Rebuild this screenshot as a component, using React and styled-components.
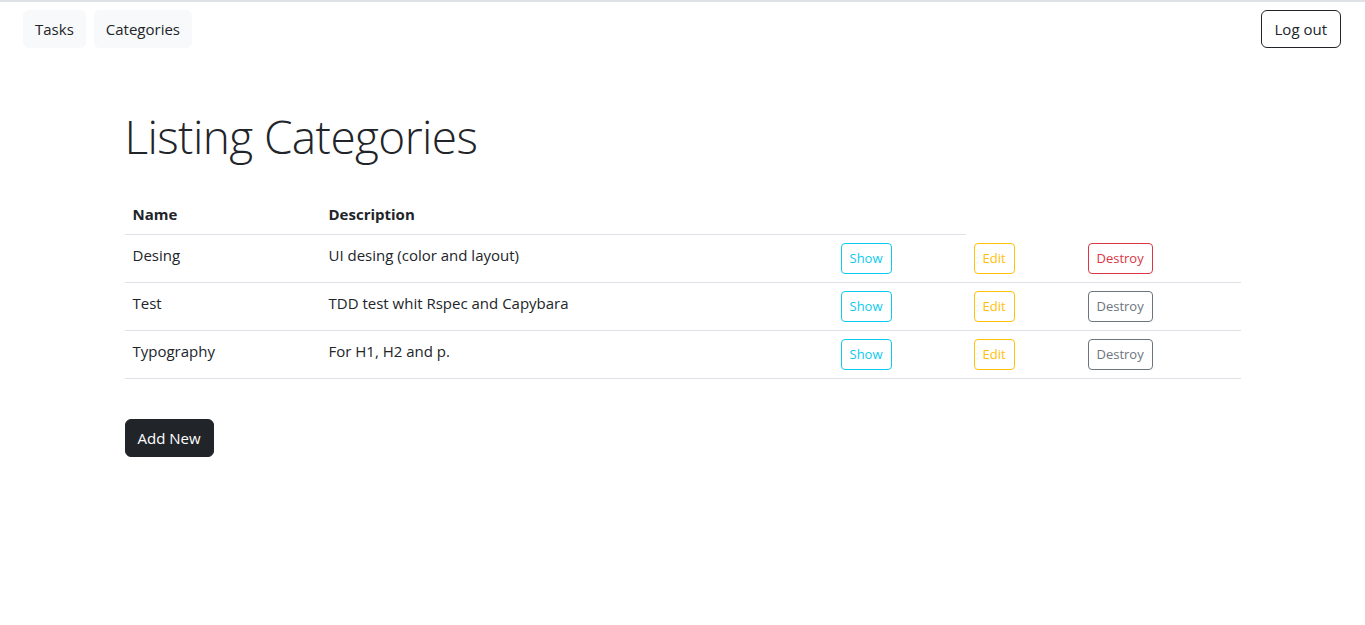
import React from 'react';
import styled, { createGlobalStyle, css } from 'styled-components';

const GlobalStyle = createGlobalStyle`
  body {
    margin: 0;
    border-top: 2px solid #dee2e6;
    font-family: "Open Sans", "Noto Sans", sans-serif;
    font-size: 16px;
    line-height: 1.5;
    color: #212529;
    background: #fff;
  }
  * { box-sizing: border-box; }
`;

const NavBar = styled.nav`
  display: flex;
  align-items: center;
  justify-content: space-between;
  padding: 8px 24px 0 23px;
`;

const NavGroup = styled.div`
  display: flex;
  gap: 8px;
`;

const Button = styled.button`
  font-family: inherit;
  font-size: 15px;
  line-height: 24px;
  padding: 6px 12px;
  border-radius: 6px;
  border: 1px solid transparent;
  cursor: pointer;
  background: transparent;
  ${({ $variant }) => $variant === 'light' && css`
    background: #f8f9fa;
    border-color: #f8f9fa;
    color: #212529;
    padding: 6px 11px;
  `}
  ${({ $variant }) => $variant === 'outline-dark' && css`
    border-color: #212529;
    color: #212529;
    padding: 6px 13px;
  `}
  ${({ $variant }) => $variant === 'dark' && css`
    background: #212529;
    border-color: #212529;
    color: #fff;
  `}
`;

const SmallButton = styled.button`
  font-family: inherit;
  font-size: 13px;
  line-height: 21px;
  padding: 4px 8px;
  border-radius: 4px;
  background: transparent;
  border: 1px solid ${({ $color }) => $color};
  color: ${({ $color }) => $color};
  cursor: pointer;
`;

const Container = styled.main`
  width: 1140px;
  margin: 0 auto;
  padding: 0 12px;
`;

const Title = styled.h1`
  font-size: 46px;
  font-weight: 300;
  line-height: 1.2;
  margin: 61px 0 30px;
  letter-spacing: -0.6px;
`;

const Table = styled.table`
  width: 100%;
  border-collapse: collapse;
  font-size: 15px;
`;

const Th = styled.th`
  text-align: left;
  font-weight: 700;
  padding: 8px;
  line-height: 24px;
  border-bottom: 1px solid ${({ $lined }) => ($lined ? '#dee2e6' : 'transparent')};
  width: ${({ $w }) => $w}px;
`;

const Td = styled.td`
  padding: 8px;
  vertical-align: top;
  line-height: 24px;
  border-bottom: 1px solid #dee2e6;
`;

const Footer = styled.div`
  margin-top: 40px;
`;

const categories = [
  { name: 'Desing', description: 'UI desing (color and layout)', danger: true },
  { name: 'Test', description: 'TDD test whit Rspec and Capybara' },
  { name: 'Typography', description: 'For H1, H2 and p.' },
];

export default function App() {
  return (
    <>
      <GlobalStyle />
      <NavBar>
        <NavGroup>
          <Button $variant="light">Tasks</Button>
          <Button $variant="light">Categories</Button>
        </NavGroup>
        <Button $variant="outline-dark">Log out</Button>
      </NavBar>
      <Container>
        <Title>Listing Categories</Title>
        <Table>
          <thead>
            <tr>
              <Th $lined $w={196}>Name</Th>
              <Th $lined $w={512}>Description</Th>
              <Th $lined $w={133}></Th>
              <Th $w={114}></Th>
              <Th></Th>
            </tr>
          </thead>
          <tbody>
            {categories.map((c) => (
              <tr key={c.name}>
                <Td>{c.name}</Td>
                <Td>{c.description}</Td>
                <Td><SmallButton $color="#0dcaf0">Show</SmallButton></Td>
                <Td><SmallButton $color="#ffc107">Edit</SmallButton></Td>
                <Td>
                  <SmallButton $color={c.danger ? '#dc3545' : '#6c757d'}>Destroy</SmallButton>
                </Td>
              </tr>
            ))}
          </tbody>
        </Table>
        <Footer>
          <Button $variant="dark">Add New</Button>
        </Footer>
      </Container>
    </>
  );
}
